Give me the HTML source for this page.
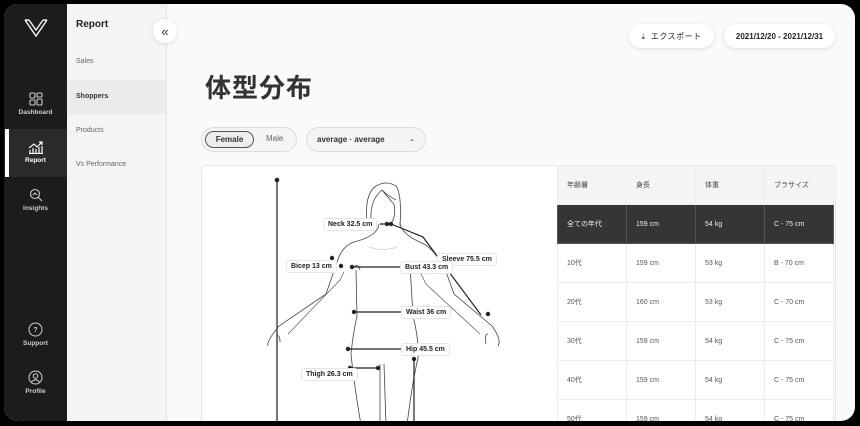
<!DOCTYPE html>
<html><head><meta charset="utf-8"><style>
*{margin:0;padding:0;box-sizing:border-box}
body{width:860px;height:426px;background:#000;position:relative;overflow:hidden;font-family:"Liberation Sans","Noto Sans CJK JP",sans-serif}
.screen{position:absolute;left:4px;top:4px;width:851px;height:417px;border-radius:14px;overflow:hidden;background:#fafafa}
.side{position:absolute;left:0;top:0;width:63px;height:417px;background:#1c1c1c}
.nav{position:absolute;left:63px;top:0;width:100px;height:417px;background:#f4f4f4;border-right:1px solid #e2e2e2}
.ni{position:absolute;left:0;width:63px;text-align:center;color:#ccc;font-size:6.5px;font-weight:bold}
.ni svg{display:block;margin:0 auto 3px}
.sub{position:absolute;left:9px;font-size:8px;color:#444}
.pill{position:absolute;background:#fff;border-radius:12px;box-shadow:0 1px 4px rgba(0,0,0,.12);font-size:8px;font-weight:bold;color:#222;display:flex;align-items:center;justify-content:center}
table{border-collapse:collapse;position:absolute;left:553px;top:161px}
td{width:69px;height:39px;font-size:7px;color:#555;padding-left:9px;border:1px solid #ececec;background:#fff}
tr.h td{background:#f4f4f4;color:#444}
tr.d td{background:#353535;color:#eee;border-color:#555}
.lb{position:absolute;background:#fff;border:1px solid #e6e6e6;border-radius:3px;font-size:7px;font-weight:bold;color:#222;padding:2px 4px;white-space:nowrap}
</style></head><body>
<div class="screen">
<div class="side">
 <svg style="position:absolute;left:20px;top:14px" width="24" height="20" viewBox="0 0 24 20"><path d="M1 2 L12 18 L23 2 M5 2 L12 12 L19 2 M1 2 H5 M19 2 H23" stroke="#eee" stroke-width="1.5" fill="none"/></svg>
 <div class="ni" style="top:88px"><svg width="14" height="14" viewBox="0 0 14 14" fill="none" stroke="#ccc" stroke-width="1.1"><rect x="1" y="1" width="5" height="5" rx="1"/><rect x="8" y="1" width="5" height="4" rx="1"/><rect x="1" y="8" width="5" height="5" rx="1"/><rect x="8" y="7" width="5" height="6" rx="1"/></svg>Dashboard</div>
 <div style="position:absolute;left:0;top:125px;width:63px;height:48px;background:#2a2a2a"></div>
 <div style="position:absolute;left:1px;top:125px;width:4px;height:48px;background:#fff"></div>
 <div class="ni" style="top:136px;color:#fff"><svg width="16" height="14" viewBox="0 0 16 14" fill="none" stroke="#fff" stroke-width="1.2"><path d="M1 8 L6 4 L9 7 L14 2 M11 2 H14 V5"/><path d="M2 13 V10 M5 13 V8 M8 13 V9 M11 13 V7 M14 13 V6 M1 13.5 H15"/></svg>Report</div>
 <div class="ni" style="top:184px"><svg width="14" height="14" viewBox="0 0 14 14" fill="none" stroke="#ccc" stroke-width="1.1"><circle cx="6" cy="6" r="4.5"/><path d="M9 9 L13 13"/><path d="M4 7 L6 5 L8 7"/></svg>Insights</div>
 <div class="ni" style="top:318px"><svg width="15" height="15" viewBox="0 0 15 15" fill="none" stroke="#ccc" stroke-width="1"><circle cx="7.5" cy="7.5" r="6.5"/><text x="7.5" y="10" font-size="7" text-anchor="middle" fill="#ccc" stroke="none" font-family="Liberation Sans">?</text></svg>Support</div>
 <div class="ni" style="top:366px"><svg width="15" height="15" viewBox="0 0 15 15" fill="none" stroke="#ccc" stroke-width="1"><circle cx="7.5" cy="7.5" r="6.5"/><circle cx="7.5" cy="6" r="2.3"/><path d="M3.5 12 Q7.5 7.5 11.5 12"/></svg>Profile</div>
</div>
<div class="nav">
 <div class="sub" style="top:15px;font-size:10px;font-weight:bold;color:#222">Report</div>
 <div class="sub" style="top:54px;font-size:7px;color:#666">Sales</div>
 <div style="position:absolute;left:0;top:76px;width:99px;height:34px;background:#ebebeb"></div>
 <div class="sub" style="top:89px;font-size:7px;font-weight:bold;color:#333">Shoppers</div>
 <div class="sub" style="top:123px;font-size:7px;color:#666">Products</div>
 <div class="sub" style="top:157px;font-size:7px;color:#666">Vs Performance</div>
</div>
<div class="pill" style="left:149px;top:15px;width:24px;height:24px;font-size:13px;font-weight:normal;color:#333">«</div>
<div class="pill" style="left:625px;top:20px;width:85px;height:24px;font-weight:normal;letter-spacing:.5px">⤓&nbsp;&nbsp;エクスポート</div>
<div class="pill" style="left:720px;top:20px;width:111px;height:24px">2021/12/20 - 2021/12/31</div>
<div style="position:absolute;left:201px;top:64px;font-size:26px;font-weight:bold;color:#333;font-family:'Noto Sans CJK JP',sans-serif;letter-spacing:1px">体型分布</div>
<div style="position:absolute;left:197px;top:123px;width:96px;height:25px;border:1px solid #ddd;border-radius:13px;background:#f4f4f4"></div>
<div style="position:absolute;left:201px;top:127px;width:49px;height:17px;border:1px solid #555;border-radius:9px;background:#eee;font-size:8px;font-weight:bold;color:#333;text-align:center;line-height:15px">Female</div>
<div style="position:absolute;left:262px;top:130px;font-size:8px;color:#666">Male</div>
<div style="position:absolute;left:302px;top:123px;width:120px;height:25px;border:1px solid #ddd;border-radius:13px;background:#f4f4f4;font-size:8px;font-weight:bold;color:#333;padding:7px 0 0 10px">average · average<span style="position:absolute;right:10px;top:7px;font-weight:normal;font-size:7px">⌄</span></div>
<div style="position:absolute;left:197px;top:161px;width:635px;height:270px;background:#fff;border:1px solid #e6e6e6;border-radius:5px"></div>
<svg style="position:absolute;left:197px;top:161px" width="360" height="260" viewBox="197 161 360 260" fill="none" stroke="#444" stroke-width="0.8">
 <path d="M363 220 Q360 190 372 182 Q382 176 392 182 Q398 190 396 222" />
 <path d="M367 215 Q366 196 378 186 Q386 196 390 200 Q392 212 388 218 M378 186 Q384 192 392 196"/>
 <path d="M375 220 Q374 232 350 238 Q338 242 333 258 L322 290 L275 322 Q262 338 264 342 M272 332 Q276 330 276 338"/>
 <path d="M396 218 Q396 230 420 240 Q428 244 440 262 L450 290 L488 322 Q498 336 494 342 M484 330 Q480 330 482 340"/>
 <path d="M340 268 L336 276 L284 330 M416 268 L422 280 L476 330" stroke="#666"/>
 <path d="M352 266 L353 312 Q349 330 347 350 Q350 380 357 421 M406 262 L409 312 Q415 335 414 354 Q408 380 403 421"/>
 <path d="M376 360 L376 421 M380 360 L382 421"/>
 <path d="M365 243 Q380 248 393 243" stroke="#ccc"/>
 <path d="M349 264 Q354 258 356 266 M402 264 Q408 258 412 266"/>
</svg>
<svg style="position:absolute;left:0;top:0" width="851" height="417" fill="#222" stroke="#222" stroke-width="1">
 <g fill="none">
 <path d="M273 176 V417" stroke="#555" stroke-width="1.6"/>
 <path d="M376 220 H383 M387 220 L419 233 L477 311" stroke-width="1.2"/>
 <path d="M348 263 H400" stroke-width="1.2"/>
 <path d="M350 308 H400" stroke-width="1.2"/>
 <path d="M344 345 H400" stroke-width="1.2"/>
 <path d="M346 364 H374" stroke-width="1.2"/>
 <path d="M410 355 V417" stroke-width="1.2"/>
 </g>
 <circle cx="273" cy="176" r="1.8"/><circle cx="383" cy="220" r="1.7"/><circle cx="387" cy="220" r="1.7"/><circle cx="484" cy="310" r="1.7"/>
 <circle cx="328" cy="254" r="1.7"/><circle cx="337" cy="262" r="1.7"/><circle cx="348" cy="263" r="1.7"/><circle cx="350" cy="308" r="1.7"/><circle cx="344" cy="345" r="1.7"/><circle cx="346" cy="364" r="1.7"/><circle cx="374" cy="364" r="1.7"/><circle cx="410" cy="355" r="1.7"/>
</svg>
<div class="lb" style="left:319px;top:214px">Neck 32.5 cm</div>
<div class="lb" style="left:433px;top:249px">Sleeve 75.5 cm</div>
<div class="lb" style="left:282px;top:256px">Bicep 13 cm</div>
<div class="lb" style="left:396px;top:257px">Bust 43.3 cm</div>
<div class="lb" style="left:397px;top:302px">Waist 36 cm</div>
<div class="lb" style="left:397px;top:339px">Hip 45.5 cm</div>
<div class="lb" style="left:297px;top:364px">Thigh 26.3 cm</div>
<table>
<tr class="h"><td>年齢層</td><td>身長</td><td>体重</td><td>ブラサイズ</td></tr>
<tr class="d"><td>全ての年代</td><td>159 cm</td><td>54 kg</td><td>C - 75 cm</td></tr>
<tr><td>10代</td><td>159 cm</td><td>53 kg</td><td>B - 70 cm</td></tr>
<tr><td>20代</td><td>160 cm</td><td>53 kg</td><td>C - 70 cm</td></tr>
<tr><td>30代</td><td>159 cm</td><td>54 kg</td><td>C - 75 cm</td></tr>
<tr><td>40代</td><td>159 cm</td><td>54 kg</td><td>C - 75 cm</td></tr>
<tr><td>50代</td><td>159 cm</td><td>54 kg</td><td>C - 75 cm</td></tr>
</table>
</div>
</body></html>
